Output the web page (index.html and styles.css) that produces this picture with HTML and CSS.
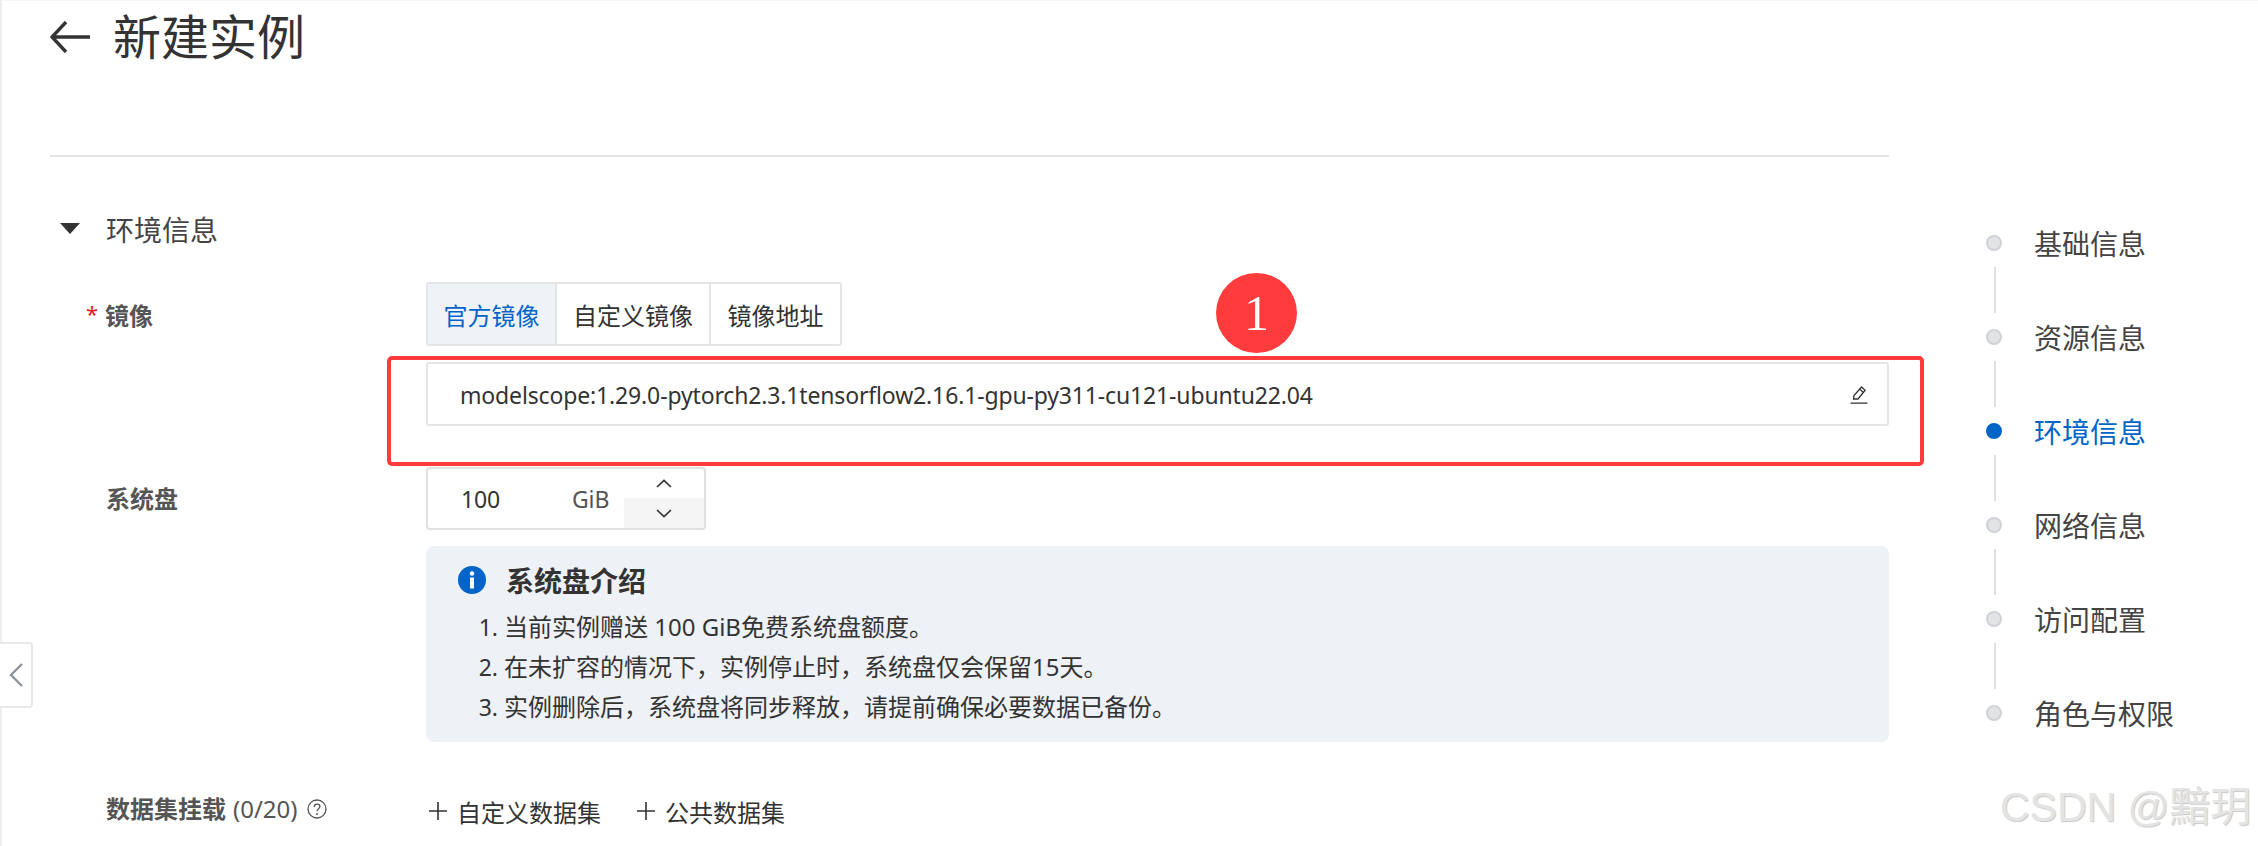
FILE: index.html
```html
<!DOCTYPE html>
<html lang="zh-CN">
<head>
<meta charset="utf-8">
<title>新建实例</title>
<link rel="stylesheet" href="styles.css">
</head>
<body>
<div class="page">
  <main class="main">
    <header class="head">
      <svg class="back" viewBox="0 0 40 32" width="40" height="32"><path d="M40 16H2M16 1 2 16l14 15" fill="none" stroke="#333" stroke-width="3.4"/></svg>
      <h1 class="title">新建实例</h1>
    </header>
    <div class="section-head">
      <span class="tri"></span>
      <span class="section-title">环境信息</span>
    </div>
    <div class="row row-image">
      <div class="label"><span class="star">*</span><b class="label-star">镜像</b></div>
      <div class="field">
        <div class="tabs">
          <span class="tab tab-on">官方镜像</span>
          <span class="tab tab-b">自定义镜像</span>
          <span class="tab tab-c">镜像地址</span>
        </div>
        <div class="image-input">
          <span class="latin">modelscope:1.29.0-pytorch2.3.1tensorflow2.16.1-gpu-py311-cu121-ubuntu22.04</span>
          <svg class="pencil" viewBox="0 0 18 18" width="18" height="18"><path d="M3.5 13 4 9.5 11.5 1l3.6 3.2L8 13ZM9.8 3.2l3.6 3.2M.5 17.2h17" fill="none" stroke="#333" stroke-width="1.3"/></svg>
        </div>
      </div>
    </div>
    <div class="row row-disk">
      <div class="label"><b>系统盘</b></div>
      <div class="field">
        <div class="stepper">
          <span class="num latin">100</span>
          <span class="unit latin">GiB</span>
          <div class="arrows">
            <span class="arrow"><svg viewBox="0 0 16 9" width="16" height="9"><path d="M1 8 8 1.5 15 8" fill="none" stroke="#333" stroke-width="1.7"/></svg></span>
            <span class="arrow arrow-down"><svg viewBox="0 0 16 9" width="16" height="9"><path d="M1 1 8 7.5 15 1" fill="none" stroke="#333" stroke-width="1.7"/></svg></span>
          </div>
        </div>
        <div class="notice">
          <div class="notice-head">
            <svg viewBox="0 0 28 28" width="28" height="28"><circle cx="14" cy="14" r="14" fill="#0064c8"/><circle cx="14" cy="7.5" r="2.2" fill="#fff"/><rect x="12" y="11.5" width="4" height="11" fill="#fff"/></svg>
            <strong class="notice-title">系统盘介绍</strong>
          </div>
          <ol class="notice-list">
            <li>当前实例赠送 100 GiB免费系统盘额度。</li>
            <li>在未扩容的情况下，实例停止时，系统盘仅会保留15天。</li>
            <li>实例删除后，系统盘将同步释放，请提前确保必要数据已备份。</li>
          </ol>
        </div>
      </div>
    </div>
    <div class="row row-data">
      <div class="label label-data"><b>数据集挂载</b><span class="count">(0/20)</span>
        <svg viewBox="0 0 20 20" width="20" height="20"><circle cx="10" cy="10" r="9" fill="none" stroke="#555" stroke-width="1.3"/><path d="M7.2 8c0-1.8 1.3-2.8 2.9-2.8s2.8 1 2.8 2.4c0 2.2-2.9 2.2-2.9 4.6" fill="none" stroke="#555" stroke-width="1.3"/><circle cx="10" cy="15" r="1" fill="#555"/></svg>
      </div>
      <div class="actions">
        <span class="action"><svg viewBox="0 0 20 20" width="20" height="20"><path d="M10 1v18M1 10h18" stroke="#333" stroke-width="1.6"/></svg>自定义数据集</span>
        <span class="action"><svg viewBox="0 0 20 20" width="20" height="20"><path d="M10 1v18M1 10h18" stroke="#333" stroke-width="1.6"/></svg>公共数据集</span>
      </div>
    </div>
  </main>
  <nav class="steps">
    <div class="step"><span class="dot"></span><span>基础信息</span></div>
    <div class="link"></div>
    <div class="step"><span class="dot"></span><span>资源信息</span></div>
    <div class="link"></div>
    <div class="step step-on"><span class="dot"></span><span>环境信息</span></div>
    <div class="link"></div>
    <div class="step"><span class="dot"></span><span>网络信息</span></div>
    <div class="link"></div>
    <div class="step"><span class="dot"></span><span>访问配置</span></div>
    <div class="link"></div>
    <div class="step"><span class="dot"></span><span>角色与权限</span></div>
  </nav>
</div>
<div class="collapse"><svg viewBox="0 0 14 24" width="14" height="24"><path d="M13 1 2 12l11 11" fill="none" stroke="#8d939c" stroke-width="2.4"/></svg></div>
<div class="mark-box"></div>
<div class="mark-num">1</div>
<div class="watermark">CSDN @黯玥</div>
</body>
</html>
```

FILE: styles.css
```css
* { box-sizing: border-box; }
html, body { margin: 0; padding: 0; }
body {
  position: relative;
  width: 2258px;
  height: 846px;
  overflow: hidden;
  background: #fff;
  color: #333;
  font-family: "Noto Sans", "Noto Sans CJK SC", sans-serif;
  font-size: 24px;
}
.latin { font-size: 23px; letter-spacing: -0.15px; }
.page {
  display: flex;
  height: 846px;
  border-left: 2px solid #eee;
  border-top: 1px solid #f6f6f6;
}
.main { width: 1839px; margin-left: 48px; flex: none; }
.head {
  display: flex;
  align-items: center;
  gap: 23px;
  height: 156px;
  padding-bottom: 82px;
  border-bottom: 2px solid #e5e5e5;
}
.back { flex: none; }
.title { margin: 0; font-size: 48px; font-weight: 400; line-height: 60px; color: #333; }
.section-head {
  display: flex;
  align-items: center;
  height: 125px;
  padding-top: 18px;
}
.tri {
  width: 0; height: 0;
  margin-left: 10px;
  border-left: 10px solid transparent;
  border-right: 10px solid transparent;
  border-top: 11px solid #333;
}
.section-title { margin-left: 26px; font-size: 28px; color: #444; }
.row { display: flex; }
.label {
  width: 376px;
  flex: none;
  padding-left: 56px;
  line-height: 32px;
  color: #555;
  position: relative;
}
.row-image .label { padding-top: 18px; }
.label-star { margin-left: -1px; }
.star { position: absolute; left: 36px; top: 15px; color: #e02020; font-size: 22px; }
.field { flex: 1; min-width: 0; }
.tabs { display: inline-flex; height: 64px; border: 2px solid #e5e5e5; border-radius: 3px; }
.tab { display: flex; align-items: center; justify-content: center; height: 60px; color: #333; }
.tab-on { width: 129px; background: #eff2f7; color: #0064c8; border-right: 2px solid #e5e5e5; }
.tab-b { width: 154px; border-right: 2px solid #e5e5e5; }
.tab-c { width: 129px; }
.image-input {
  display: flex;
  align-items: center;
  justify-content: space-between;
  height: 64px;
  margin-top: 16px;
  padding: 2px 19px 0 32px;
  border: 2px solid #e5e5e5;
  border-radius: 3px;
  color: #333;
}
.pencil { flex: none; }
.row-disk { margin-top: 41px; }
.row-disk .label { padding-top: 16px; }
.stepper {
  display: flex;
  width: 280px;
  height: 63px;
  border: 2px solid #e0e0e0;
  border-radius: 4px;
  align-items: center;
}
.num { width: 118px; padding-left: 33px; color: #333; }
.unit { width: 78px; padding-left: 26px; color: #555; }
.arrows { display: flex; flex-direction: column; width: 80px; height: 59px; }
.arrow { display: flex; align-items: center; justify-content: center; flex: 1; }
.arrow-down { background: #f5f5f5; flex: 0 0 30px; }
.notice {
  height: 196px;
  margin-top: 16px;
  padding: 20px 32px;
  background: #eef1f6;
  border-radius: 8px;
}
.notice-head { display: flex; align-items: center; gap: 20px; height: 28px; }
.notice-title { font-size: 28px; font-weight: 700; color: #333; }
.notice-list { margin: 13px 0 0; padding: 0 0 0 46px; }
.notice-list li { height: 40px; line-height: 40px; }
.notice-list li::marker { font-size: 23px; }
.row-data { margin-top: 47px; }
.label-data { display: flex; align-items: center; gap: 7px; height: 40px; padding-top: 0; }
.label-data svg { margin-left: 2px; }
.count { color: #555; }
.actions { display: flex; gap: 35px; align-items: center; height: 44px; padding-left: 2px; }
.action { display: flex; align-items: center; gap: 9px; color: #333; }
.steps { flex: none; margin-left: 97px; padding-top: 226px; }
.step { display: flex; align-items: center; gap: 32px; height: 32px; font-size: 28px; color: #444; white-space: nowrap; }
.dot { width: 16px; height: 16px; border-radius: 50%; background: #e2e3e5; border: 2px solid #cfd2d6; flex: none; }
.step-on { color: #0064c8; }
.step-on .dot { background: #0064c8; border-color: #0064c8; }
.link { width: 2px; height: 46px; margin: 8px 0 8px 8px; background: #e0e0e0; }
.collapse {
  position: absolute;
  left: 0; top: 642px;
  width: 33px; height: 66px;
  display: flex; align-items: center; justify-content: flex-start;
  padding-left: 9px;
  background: #fff;
  border: 2px solid #e8e8e8;
  border-left: 0;
  border-radius: 0 4px 4px 0;
}
.mark-box {
  position: absolute;
  left: 387px; top: 356px;
  width: 1537px; height: 110px;
  border: 4px solid #ff3b3b;
  border-radius: 5px;
}
.mark-num {
  position: absolute;
  left: 1216px; top: 273px;
  width: 81px; height: 80px;
  border-radius: 50%;
  background: #ff3b3b;
  color: #fff;
  font-family: "Liberation Serif", serif;
  font-size: 50px;
  line-height: 80px;
  text-align: center;
}
.watermark {
  position: absolute;
  left: 2000px; top: 783px;
  font-family: "Liberation Sans", "Noto Sans CJK SC", sans-serif;
  font-size: 41px;
  line-height: 48px;
  color: #e4e4e4;
  white-space: nowrap;
  text-shadow: 1px 1px 1px #c8c8c8;
}
```
